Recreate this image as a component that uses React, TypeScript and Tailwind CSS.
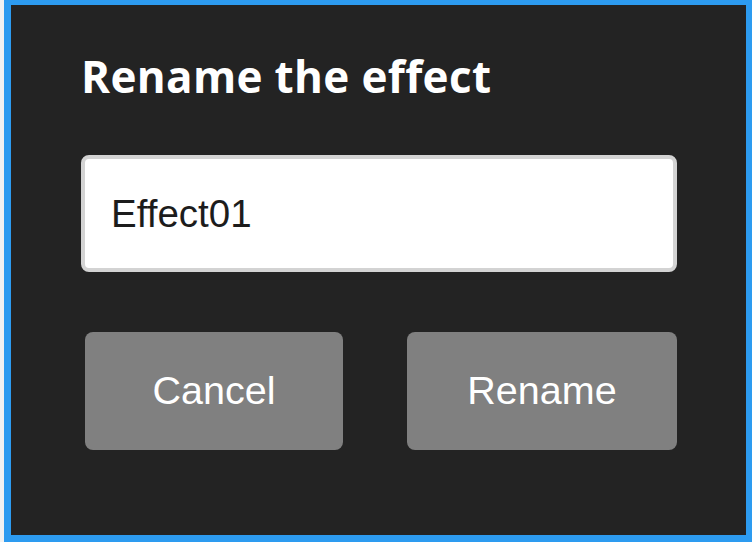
import React from 'react';

const App = (() => {
    return (
        <div className="w-[752px] h-[542px] bg-[#f2f2f2] pl-[4px] flex">
            <div
                className="flex-1 flex flex-col bg-[#232323] border-[#2d9bf0] border-t-[5px] border-l-[7px] border-r-[7px] border-b-[7px] pl-[70px] pr-[69px]">
                <h1 className="pt-[49px] text-[44px] leading-[44px] font-bold text-white tracking-[0.35px]"
                    style={{fontFamily: '"Open Sans", "Noto Sans", sans-serif'}}>
                    Rename the effect
                </h1>

                <div
                    className="mt-[57px] h-[117px] bg-white border-[4px] border-[#d3d3d3] rounded-[8px] flex items-center pl-[26px]">
                    <input
                        defaultValue="Effect01"
                        readOnly
                        className="w-full bg-transparent outline-none text-[38.5px] leading-[38px] text-[#1c1c1c]"
                        style={{fontFamily: '"Liberation Sans", Arial, sans-serif'}}
                    />
                </div>

                <div className="mt-[60px] flex gap-[64px] pl-[4px]"
                     style={{fontFamily: '"Liberation Sans", Arial, sans-serif'}}>
                    <button
                        className="w-[258px] h-[118px] bg-[#808080] rounded-[8px] text-white text-[39.5px] leading-none">
                        Cancel
                    </button>
                    <button
                        className="w-[270px] h-[118px] bg-[#808080] rounded-[8px] text-white text-[39.5px] leading-none">
                        Rename
                    </button>
                </div>
            </div>
        </div>
    )
})

export default App
